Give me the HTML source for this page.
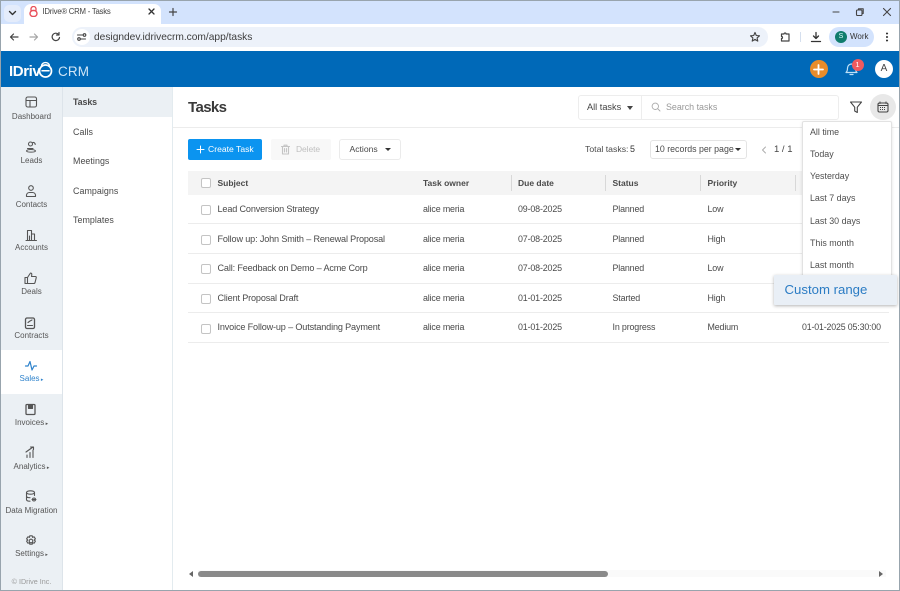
<!DOCTYPE html>
<html><head><meta charset="utf-8">
<style>
*{box-sizing:border-box}
html,body{margin:0;padding:0;width:900px;height:591px;overflow:hidden;background:#fff;font-family:"Liberation Sans",sans-serif;color:#444}
.a{position:absolute;white-space:nowrap}
.t{position:absolute;white-space:nowrap;font-size:8.9px;letter-spacing:-.15px;color:#4a4a4a;line-height:12px}
.s{font-size:9.100px}
.b{font-weight:bold;font-size:8.5px;letter-spacing:0;color:#4a4a4a}
svg{position:absolute;fill:none;stroke:#555;stroke-width:1.1;stroke-linecap:round;stroke-linejoin:round}
.nav{position:absolute;left:1px;width:61px;text-align:center;font-size:8px;color:#555;line-height:10px;white-space:nowrap}
.sub{position:absolute;left:73px;font-size:8.9px;letter-spacing:.05px;color:#4a4a4a;line-height:12px}
.hl{position:absolute;left:188px;width:701px;height:1px;background:#ececec}
.cb{position:absolute;left:201px;width:9.500px;height:9.500px;border:1px solid #c4c4c4;border-radius:2px;background:#fff}
.sep{position:absolute;top:175px;width:1px;height:16px;background:#d8d8d8}
.m{position:absolute;left:810px;font-size:8.900px;color:#4f4f4f;line-height:12px;white-space:nowrap}
</style></head><body>

<!-- browser chrome -->
<div class="a" style="left:0;top:0;width:900px;height:24px;background:#d3e3fd"></div>
<div class="a" style="left:0;top:24px;width:900px;height:27px;background:#fff"></div>
<div class="a" style="left:24px;top:4px;width:137px;height:20px;background:#fff;border-radius:7px 7px 0 0"></div>
<div class="a" style="left:4px;top:5px;width:17px;height:17px;background:#e4ecfb;border-radius:5px"></div>
<svg style="left:8px;top:9px" width="9" height="8" viewBox="0 0 9 8"><path d="M1.500 2.500 4.500 5.500 7.500 2.500" stroke="#333" stroke-width="1.400"/></svg>
<svg style="left:29px;top:6px" width="9" height="11" viewBox="0 0 9 11"><path d="M2 4.500V3a2.500 2.500 0 0 1 5 0v1.500" stroke="#e8505b" stroke-width="1.300"/><rect x="1" y="4.500" width="7" height="6" rx="3" stroke="#e8505b" stroke-width="1.400"/></svg>
<div class="a" style="left:42.500px;top:6px;font-size:7.800px;letter-spacing:-.25px;line-height:12px;color:#444">IDrive® CRM - Tasks</div>
<svg style="left:147px;top:7px" width="9" height="9" viewBox="0 0 9 9"><path d="M2 2 7 7M7 2 2 7" stroke="#333" stroke-width="1.300"/></svg>
<svg style="left:168px;top:7px" width="10" height="10" viewBox="0 0 10 10"><path d="M5 1.500v7M1.500 5h7" stroke="#444" stroke-width="1.200"/></svg>
<svg style="left:830px;top:8px" width="12" height="8" viewBox="0 0 12 8"><path d="M3 4h6" stroke="#444"/></svg>
<svg style="left:854px;top:6px" width="12" height="12" viewBox="0 0 12 12"><rect x="2.500" y="4" width="5.500" height="5.500" rx="1" stroke="#444"/><path d="M4.500 4V2.800h4.700v4.700H8" stroke="#444"/></svg>
<svg style="left:881px;top:6px" width="12" height="12" viewBox="0 0 12 12"><path d="M2.500 2.500 9.500 9.500M9.500 2.500 2.500 9.500" stroke="#444"/></svg>

<svg style="left:8px;top:31px" width="12" height="12" viewBox="0 0 12 12"><path d="M10 6H2.500M5.500 3 2.500 6l3 3" stroke="#444" stroke-width="1.200"/></svg>
<svg style="left:28px;top:31px" width="12" height="12" viewBox="0 0 12 12"><path d="M2 6h7.500M6.500 3l3 3-3 3" stroke="#a5a5a5" stroke-width="1.200"/></svg>
<svg style="left:50px;top:31px" width="12" height="12" viewBox="0 0 12 12"><path d="M9.500 6.500A3.700 3.700 0 1 1 8.500 3.300M9 1.500v2.500H6.500" stroke="#444" stroke-width="1.200"/></svg>
<div class="a" style="left:72px;top:27px;width:696px;height:20px;background:#edf2fa;border-radius:10px"></div>
<div class="a" style="left:74px;top:29px;width:16px;height:16px;background:#fff;border-radius:8px"></div>
<svg style="left:76px;top:32px" width="12" height="10" viewBox="0 0 12 10"><path d="M1.500 3h5M9.500 7h-5" stroke="#444"/><circle cx="8.500" cy="3" r="1.300" stroke="#444"/><circle cx="3" cy="7" r="1.300" stroke="#444"/></svg>
<div class="a" style="left:94px;top:30.500px;font-size:10.200px;line-height:14px;color:#3d3d3d">designdev.idrivecrm.com/app/tasks</div>
<svg style="left:749px;top:31px" width="12" height="12" viewBox="0 0 12 12"><path d="M6 1.500 7.300 4.500l3.200.3-2.400 2.100.7 3.200L6 8.400 3.200 10.100l.7-3.200L1.500 4.800l3.200-.3z" stroke="#444" stroke-width="1.100"/></svg>
<svg style="left:779px;top:31px" width="12" height="12" viewBox="0 0 12 12"><path d="M2.500 3H5a1 1 0 0 1 2 0h3v7H2.500V7.500a1 1 0 0 0 0-2z" stroke="#444" stroke-width="1.200"/></svg>
<div class="a" style="left:800px;top:32px;width:1px;height:10px;background:#d5dfee"></div>
<svg style="left:810px;top:31px" width="12" height="12" viewBox="0 0 12 12"><path d="M6 1.500v6M3.500 5 6 7.500 8.500 5M1.500 10.500h9" stroke="#333" stroke-width="1.300"/></svg>
<div class="a" style="left:829px;top:27px;width:45px;height:20px;background:#d3e3fd;border-radius:10px"></div>
<div class="a" style="left:835px;top:31px;width:12px;height:12px;background:#0f7c6c;border-radius:6px;color:#dff;font-size:7px;line-height:12px;text-align:center">S</div>
<div class="a" style="left:850px;top:31px;font-size:8px;line-height:12px;color:#333">Work</div>
<svg style="left:884px;top:32px" width="6" height="10" viewBox="0 0 6 10"><circle cx="3" cy="1.500" r=".8" fill="#333" stroke="#333" stroke-width=".5"/><circle cx="3" cy="5" r=".8" fill="#333" stroke="#333" stroke-width=".5"/><circle cx="3" cy="8.500" r=".8" fill="#333" stroke="#333" stroke-width=".5"/></svg>

<!-- app header -->
<div class="a" style="left:0;top:51px;width:900px;height:36px;background:#0069b8"></div>
<div class="a" style="left:9px;top:62.500px;font-size:15px;font-weight:bold;letter-spacing:-.4px;line-height:18px;color:#fff">IDriv</div>
<svg style="left:38px;top:60px" width="16" height="19" viewBox="0 0 16 19"><circle cx="7.500" cy="11" r="6" stroke="#fff" stroke-width="1.700"/><path d="M4 10.800h7" stroke="#fff" stroke-width="1.500"/><path d="M3.500 5.500a4.200 4.200 0 0 1 8 0" stroke="#fff" stroke-width="1.300"/></svg>
<div class="a" style="left:58px;top:62.500px;font-size:13.500px;line-height:17px;color:#cfe5f6;letter-spacing:.1px">CRM</div>
<div class="a" style="left:809.500px;top:60px;width:18px;height:18px;border-radius:9px;background:#e88c2b"></div>
<svg style="left:812px;top:62.500px" width="13" height="13" viewBox="0 0 13 13"><path d="M6.500 2v9M2 6.500h9" stroke="#fff" stroke-width="1.800"/></svg>
<svg style="left:844px;top:61px" width="15" height="15" viewBox="0 0 15 15"><path d="M2 11.500h11c-1.300-1-1.500-2-1.500-4.500a4 4 0 0 0-8 0c0 2.500-.2 3.500-1.500 4.500zM6 13.500h3" stroke="#bfe0f7" stroke-width="1.200"/></svg>
<div class="a" style="left:851.500px;top:58.500px;width:12px;height:12px;border-radius:6px;background:#ee5a5f;color:#fff;font-size:7.500px;line-height:12px;text-align:center">1</div>
<div class="a" style="left:875px;top:60px;width:18px;height:18px;border-radius:9px;background:#fff;color:#444;font-size:10px;line-height:18px;text-align:center">A</div>

<!-- sidebar -->
<div class="a" style="left:0;top:87px;width:62.500px;height:504px;background:#ebf0f4;border-right:1px solid #dde4ea"></div>
<div class="a" style="left:1px;top:350px;width:61px;height:44px;background:#fff"></div>
<div class="a" style="left:62.500px;top:87px;width:110px;height:504px;background:#fff;border-right:1px solid #e3ebef"></div>
<div class="a" style="left:63px;top:87px;width:109px;height:30px;background:#ebf0f4"></div>

<svg style="left:24px;top:95px" width="14" height="14" viewBox="0 0 14 14"><rect x="2" y="2" width="10.500" height="10" rx="1.800"/><path d="M2 5.500h10.500M6 5.500V12"/></svg>
<div class="nav" style="top:112px">Dashboard</div>
<svg style="left:24px;top:140px" width="14" height="14" viewBox="0 0 14 14"><circle cx="6.500" cy="4" r="2"/><path d="M8.800 2.500a2 2 0 0 1 2.400 2M3.500 8.500h5.500M2.500 11c.5-2 8-2 9 0-.5 1.500-8.500 1.500-9 0z"/></svg>
<div class="nav" style="top:156px">Leads</div>
<svg style="left:24px;top:184px" width="14" height="14" viewBox="0 0 14 14"><circle cx="7" cy="4" r="2.300"/><path d="M2.500 12.500V11a3 3 0 0 1 3-2.500h3a3 3 0 0 1 3 2.500v1.500z"/></svg>
<div class="nav" style="top:199.500px">Contacts</div>
<svg style="left:24px;top:228px" width="14" height="14" viewBox="0 0 14 14"><path d="M2 12.500h10.500M3.500 12.500V2.500h4v10M7.500 6h3v6.500M5.500 12.500V8"/></svg>
<div class="nav" style="top:243px">Accounts</div>
<svg style="left:23px;top:271px" width="15" height="14" viewBox="0 0 15 14"><path d="M2 6.500h2.500v6H2zM4.500 6.500 7.500 2c1.500 0 1.500 1.500 1 3.500h4c1 0 .8 1 .6 1.800l-1 4c-.2.700-.6 1.200-1.300 1.200H4.500"/></svg>
<div class="nav" style="top:287px">Deals</div>
<svg style="left:23px;top:316px" width="14" height="14" viewBox="0 0 14 14"><rect x="2.500" y="2" width="9" height="10.500" rx="1.500" stroke-width="1.300"/><path d="M5 6.500 7 5l2-1M4.500 9.500h5"/></svg>
<div class="nav" style="top:331px">Contracts</div>
<svg style="left:24px;top:360px" width="14" height="12" viewBox="0 0 14 12"><path d="M1.500 6H4L6 1.500 8 10l2-4h2.500" stroke="#2f83cc" stroke-width="1.200"/></svg>
<div class="nav" style="top:374px;color:#2f83cc">Sales<span style="font-size:5px"> ▸</span></div>
<svg style="left:23px;top:402px" width="14" height="14" viewBox="0 0 14 14"><rect x="3" y="2.500" width="9" height="10" rx="1" stroke-width="1.300"/><path d="M5.500 3v3.500h4V3" fill="#555"/></svg>
<div class="nav" style="top:418px">Invoices<span style="font-size:5px"> ▸</span></div>
<svg style="left:24px;top:445px" width="14" height="14" viewBox="0 0 14 14"><path d="M3 12.500V10M6 12.500V7.500M9 12.500V5M2 7l7-5M6.500 2H9.500V4.500"/></svg>
<div class="nav" style="top:462px">Analytics<span style="font-size:5px"> ▸</span></div>
<svg style="left:24px;top:489px" width="14" height="14" viewBox="0 0 14 14"><ellipse cx="6.500" cy="3.500" rx="4" ry="1.700"/><path d="M2.500 3.500v7c0 1 1.500 1.700 3.500 1.700M10.500 3.500v3M2.500 7c0 1 1.500 1.700 3.500 1.700M8 10.500h4"/><circle cx="10" cy="10.500" r="1.500"/></svg>
<div class="nav" style="top:506px">Data Migration</div>
<svg style="left:24px;top:534px" width="14" height="14" viewBox="0 0 14 14"><circle cx="7" cy="7" r="1.800"/><path d="M5.800 1.800h2.400l.4 1.600 1.500-.6 1.300 2-1.200 1.200 1.200 1.200-1.300 2-1.500-.6-.4 1.600H5.800l-.4-1.600-1.500.6-1.300-2L3.800 6 2.600 4.800l1.300-2 1.500.6z"/></svg>
<div class="nav" style="top:549px">Settings<span style="font-size:5px"> ▸</span></div>
<div class="nav" style="top:577px;font-size:7.200px;color:#999">© IDrive Inc.</div>

<!-- sub nav -->
<div class="sub" style="top:96px;font-weight:bold;letter-spacing:-.1px">Tasks</div>
<div class="sub" style="top:126px">Calls</div>
<div class="sub" style="top:155px">Meetings</div>
<div class="sub" style="top:185px">Campaigns</div>
<div class="sub" style="top:214px">Templates</div>

<!-- page head -->
<div class="a" style="left:188px;top:98px;font-size:15px;font-weight:bold;letter-spacing:-.6px;line-height:19px;color:#3a3a3a">Tasks</div>
<div class="a" style="left:173px;top:127px;width:727px;height:1px;background:#ececec"></div>
<div class="a" style="left:578px;top:95px;width:261px;height:25px;border:1px solid #ededed;border-radius:3px"></div>
<div class="a" style="left:641px;top:96px;width:1px;height:23px;background:#ededed"></div>
<div class="t" style="left:587px;top:101px;color:#444;font-size:9.200px;letter-spacing:0">All tasks</div>
<div class="a" style="left:627px;top:106px;width:0;height:0;border:3.500px solid transparent;border-top:4px solid #444;border-bottom:0"></div>
<svg style="left:651px;top:102px" width="10" height="10" viewBox="0 0 10 10"><circle cx="4.300" cy="4.300" r="3.200" stroke="#aaa" stroke-width=".9"/><path d="M6.800 6.800 9 9" stroke="#aaa" stroke-width=".9"/></svg>
<div class="t" style="left:666px;top:101px;color:#999;letter-spacing:0">Search tasks</div>
<svg style="left:849px;top:100px" width="14" height="14" viewBox="0 0 14 14"><path d="M1.500 2h11L8.300 7.200V12.500L5.700 11V7.200z" stroke="#444"/></svg>
<div class="a" style="left:870px;top:94px;width:26px;height:26px;border-radius:13px;background:#e8e8e8"></div>
<svg style="left:877px;top:101px" width="12" height="12" viewBox="0 0 12 12"><rect x="1" y="2" width="10" height="9" rx="1.500" stroke="#444"/><path d="M1 4.500h10M3 .8v1.700M9 .8v1.700" stroke="#444" stroke-width=".9"/><path d="M3 6.500h6M3 8.500h6" stroke="#444" stroke-width=".9" stroke-dasharray="1 1" stroke-linecap="butt"/></svg>

<!-- toolbar -->
<div class="a" style="left:188px;top:139px;width:74px;height:21px;background:#0b94f0;border-radius:2px"></div>
<svg style="left:195px;top:144px" width="11" height="11" viewBox="0 0 11 11"><path d="M5.500 2v7M2 5.500h7" stroke="#fff" stroke-width="1"/></svg>
<div class="a" style="left:208px;top:143px;font-size:8.600px;line-height:12px;color:#fff">Create Task</div>
<div class="a" style="left:271px;top:139px;width:60px;height:21px;background:#f8f8f8;border-radius:2px"></div>
<svg style="left:280px;top:144px" width="11" height="11" viewBox="0 0 11 11"><path d="M1.500 2.500h8M4 2.500V1.200h3v1.300M2.500 2.500v7.500h6V2.500M4.500 4.500v3.500M6.500 4.500v3.500" stroke="#c4c4c4"/></svg>
<div class="t" style="left:296px;top:143px;color:#c0c0c0;font-size:8.500px;letter-spacing:-.1px">Delete</div>
<div class="a" style="left:339px;top:139px;width:62px;height:21px;border:1px solid #ebebeb;border-radius:3px"></div>
<div class="t" style="left:349.500px;top:143px;font-size:8.600px;letter-spacing:0">Actions</div>
<div class="a" style="left:385px;top:148px;width:0;height:0;border:3.500px solid transparent;border-top:3.500px solid #333;border-bottom:0"></div>
<div class="t" style="left:585px;top:143px;font-size:8.700px;letter-spacing:0">Total tasks:</div>
<div class="t" style="left:630px;top:143px;color:#333;letter-spacing:0">5</div>
<div class="a" style="left:650px;top:140px;width:97px;height:19px;border:1px solid #e4e4e4;border-radius:3px"></div>
<div class="t" style="left:655px;top:143px;font-size:8.800px;letter-spacing:0">10 records per page</div>
<div class="a" style="left:735px;top:148px;width:0;height:0;border:3px solid transparent;border-top:3px solid #333;border-bottom:0"></div>
<svg style="left:760px;top:145px" width="8" height="10" viewBox="0 0 8 10"><path d="M5.500 2 2.500 5l3 3" stroke="#aaa" stroke-width=".9"/></svg>
<div class="t" style="left:774px;top:144px;color:#444;font-size:9.500px;letter-spacing:0">1 / 1</div>

<!-- table -->
<div class="a" style="left:188px;top:171px;width:701px;height:23.500px;background:#f4f4f4"></div>
<div class="sep" style="left:511px"></div><div class="sep" style="left:605px"></div><div class="sep" style="left:700px"></div><div class="sep" style="left:795px"></div>
<div class="cb" style="top:178px"></div>
<div class="t b" style="left:217.500px;top:177px">Subject</div>
<div class="t b" style="left:423px;top:177px">Task owner</div>
<div class="t b" style="left:518px;top:177px">Due date</div>
<div class="t b" style="left:612.500px;top:177px">Status</div>
<div class="t b" style="left:707.500px;top:177px">Priority</div>

<div class="cb" style="top:205px"></div>
<div class="t s" style="left:217.500px;top:203px">Lead Conversion Strategy</div><div class="t" style="left:423px;top:203px">alice meria</div><div class="t" style="left:518px;top:203px">09-08-2025</div><div class="t" style="left:612.500px;top:203px">Planned</div><div class="t" style="left:707.500px;top:203px">Low</div>
<div class="hl" style="top:223px"></div>
<div class="cb" style="top:235px"></div>
<div class="t s" style="left:217.500px;top:233px">Follow up: John Smith – Renewal Proposal</div><div class="t" style="left:423px;top:233px">alice meria</div><div class="t" style="left:518px;top:233px">07-08-2025</div><div class="t" style="left:612.500px;top:233px">Planned</div><div class="t" style="left:707.500px;top:233px">High</div>
<div class="hl" style="top:253px"></div>
<div class="cb" style="top:264px"></div>
<div class="t s" style="left:217.500px;top:262px">Call: Feedback on Demo – Acme Corp</div><div class="t" style="left:423px;top:262px">alice meria</div><div class="t" style="left:518px;top:262px">07-08-2025</div><div class="t" style="left:612.500px;top:262px">Planned</div><div class="t" style="left:707.500px;top:262px">Low</div>
<div class="hl" style="top:283px"></div>
<div class="cb" style="top:294px"></div>
<div class="t s" style="left:217.500px;top:292px">Client Proposal Draft</div><div class="t" style="left:423px;top:292px">alice meria</div><div class="t" style="left:518px;top:292px">01-01-2025</div><div class="t" style="left:612.500px;top:292px">Started</div><div class="t" style="left:707.500px;top:292px">High</div>
<div class="hl" style="top:312px"></div>
<div class="cb" style="top:324px"></div>
<div class="t s" style="left:217.500px;top:321px">Invoice Follow-up – Outstanding Payment</div><div class="t" style="left:423px;top:321px">alice meria</div><div class="t" style="left:518px;top:321px">01-01-2025</div><div class="t" style="left:612.500px;top:321px">In progress</div><div class="t" style="left:707.500px;top:321px">Medium</div><div class="t" style="left:802px;top:321px;font-size:8.800px">01-01-2025 05:30:00</div>
<div class="hl" style="top:342px"></div>

<!-- date dropdown -->
<div class="a" style="left:802px;top:121px;width:90px;height:165px;background:#fff;border:1px solid #e2e2e2;border-radius:2px;box-shadow:0 1px 3px rgba(0,0,0,.12)"></div>
<div class="m" style="top:126px">All time</div>
<div class="m" style="top:148px">Today</div>
<div class="m" style="top:170px">Yesterday</div>
<div class="m" style="top:192px">Last 7 days</div>
<div class="m" style="top:215px">Last 30 days</div>
<div class="m" style="top:237px">This month</div>
<div class="m" style="top:259px">Last month</div>
<div class="a" style="left:774px;top:275px;width:123px;height:30px;background:#e9eff6;border-radius:1px;box-shadow:0 1px 3px rgba(0,0,0,.3)"></div>
<div class="a" style="left:784.500px;top:282px;font-size:13.200px;line-height:16px;color:#2b7cc4">Custom range</div>

<!-- scrollbar -->
<div class="a" style="left:198px;top:570px;width:688px;height:7px;background:#fafafa"></div>
<div class="a" style="left:198px;top:571px;width:410px;height:6px;background:#8a8a8a;border-radius:3px"></div>
<div class="a" style="left:189px;top:571px;width:0;height:0;border:3px solid transparent;border-right:4px solid #666;border-left:0"></div>
<div class="a" style="left:879px;top:571px;width:0;height:0;border:3px solid transparent;border-left:4px solid #666;border-right:0"></div>

<!-- window frame -->
<div class="a" style="left:0;top:0;width:900px;height:591px;border:1px solid #98a4ad;pointer-events:none"></div>
</body></html>
